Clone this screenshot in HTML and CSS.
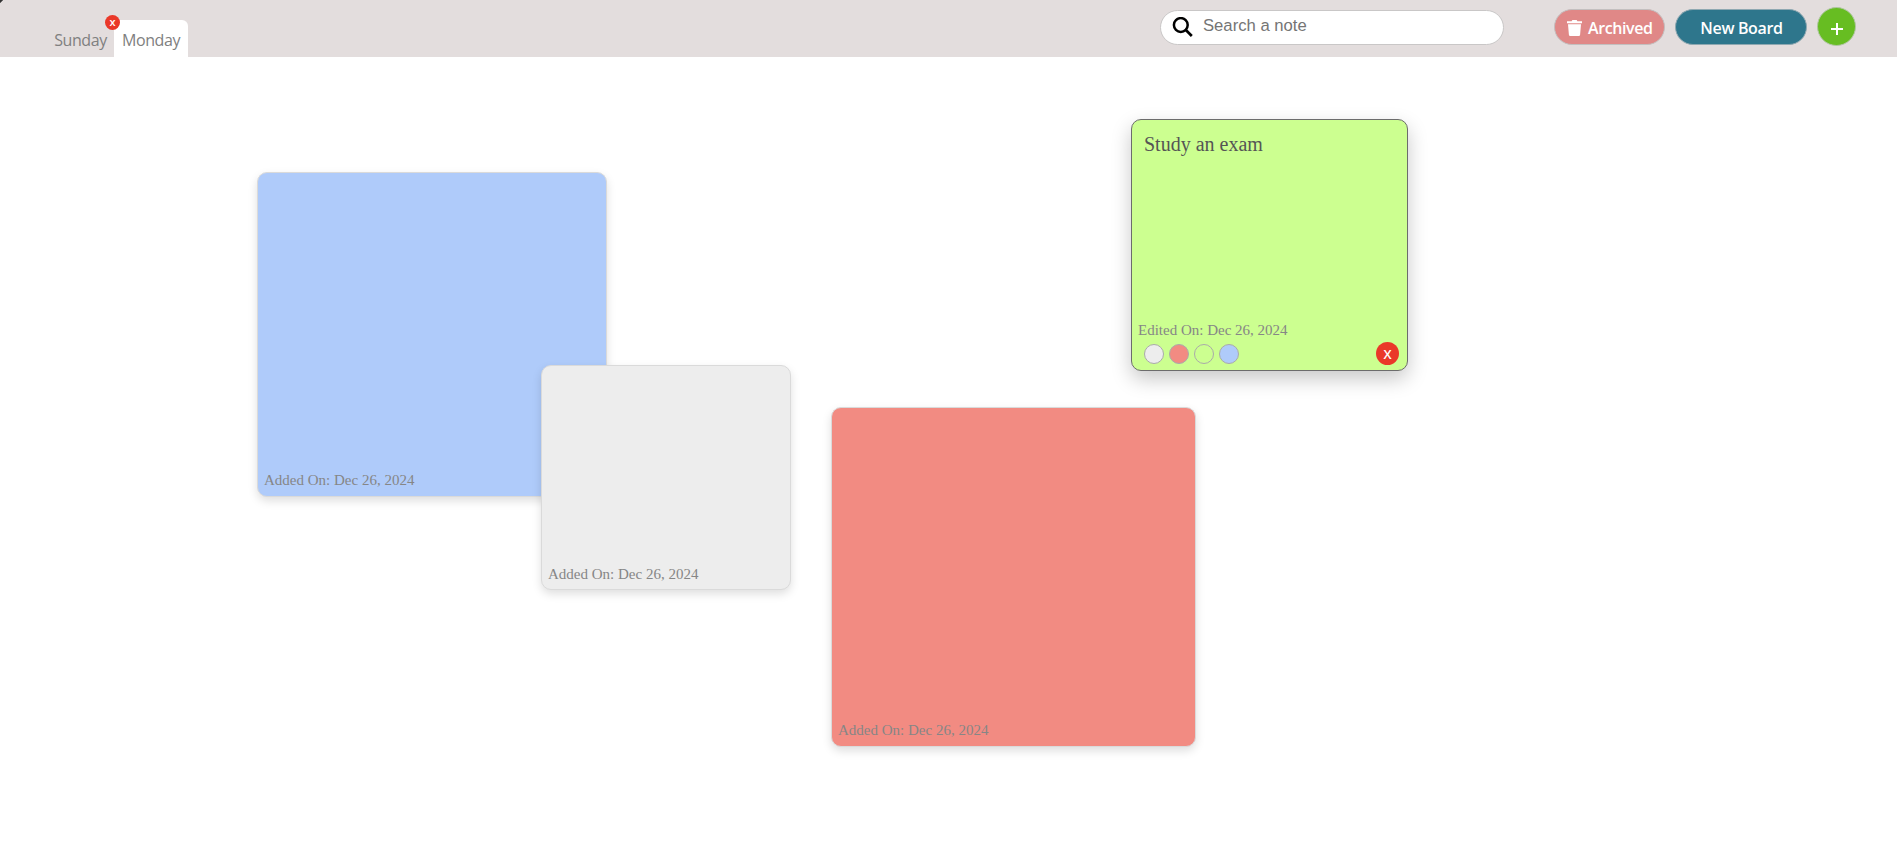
FILE: index.html
```html
<!DOCTYPE html>
<html lang="en">
<head>
<meta charset="utf-8">
<title>Notes board</title>
<link rel="stylesheet" href="styles.css">
</head>
<body>
<header class="bar">
  <nav class="tabs">
    <a class="tab tab-sunday"><span class="tab-label">Sunday</span><span class="tab-close">x</span></a>
    <a class="tab tab-active"><span class="tab-label">Monday</span></a>
  </nav>
  <div class="search">
    <svg class="search-icon" viewBox="0 0 21 21"><circle cx="8.8" cy="8.0" r="6.9" fill="none" stroke="#000" stroke-width="2.5"/><path d="M13.6 12.8L19.8 19" stroke="#000" stroke-width="2.7"/></svg>
    <input class="search-input" type="text" placeholder="Search a note">
  </div>
  <div class="actions">
    <button class="btn archived"><svg class="trash" viewBox="0 0 15 16"><path d="M0 1.2h4.6L5.4 0h4.2l.8 1.2H15v2H0zM1 4.3h13l-.9 10.5q-.1 1.2-1.3 1.2H3.2q-1.2 0-1.3-1.2z" fill="#fff"/></svg><span class="archived-label">Archived</span></button>
    <button class="btn board"><span class="board-label">New Board</span></button>
    <button class="btn add"><svg class="plus" viewBox="0 0 12 12"><path d="M6 0v12M0 6h12" stroke="#fff" stroke-width="2"/></svg></button>
  </div>
</header>
<main class="canvas">
  <article class="note note-blue"><p class="date">Added On: Dec 26, 2024</p></article>
  <article class="note note-gray"><p class="date">Added On: Dec 26, 2024</p></article>
  <article class="note note-red"><p class="date">Added On: Dec 26, 2024</p></article>
  <article class="note note-green">
    <p class="text">Study an exam</p>
    <p class="date">Edited On: Dec 26, 2024</p>
    <div class="tools">
      <span class="dot dot-gray"></span><span class="dot dot-red"></span><span class="dot dot-green"></span><span class="dot dot-blue"></span>
      <button class="remove">X</button>
    </div>
  </article>
</main>
</body>
</html>
```
FILE: styles.css
```css
* { box-sizing: border-box; }
body {
  margin: 0;
  height: 865px;
  overflow: hidden;
  background: #fff;
  font-family: "Open Sans", "Noto Sans", sans-serif;
}
button { font-family: inherit; cursor: pointer; }
.bar {
  position: relative;
  display: flex;
  height: 57px;
  background: #e3dddd;
}
.bar::before {
  content: "";
  position: absolute;
  left: 0;
  top: 0;
  width: 3px;
  height: 3px;
  background: linear-gradient(135deg, #333 45%, transparent 60%);
}
.tabs {
  display: flex;
  align-items: flex-end;
  width: 1160px;
  padding-left: 46px;
}
.tab {
  position: relative;
  display: flex;
  justify-content: center;
  height: 37px;
  padding-top: 7px;
  font-size: 16px;
  line-height: 26px;
  color: #808080;
}
.tab-sunday { width: 68px; padding-left: 1px; }
.tab-sunday .tab-label { letter-spacing: -0.45px; }
.tab-active {
  width: 74px;
  border-radius: 0 6px 0 0;
  background: #fff;
}
.tab-active .tab-label { letter-spacing: -0.4px; }
.tab-close {
  position: absolute;
  right: -6px;
  top: -5px;
  z-index: 1;
  width: 15px;
  height: 15px;
  border-radius: 50%;
  background: #ea3829;
  color: #fff;
  font-size: 11px;
  font-weight: 600;
  line-height: 13px;
  text-align: center;
}
.search {
  display: flex;
  width: 344px;
  height: 35px;
  margin-top: 10px;
  padding: 6px 11px 0;
  border: 1px solid #c9c7c7;
  border-radius: 18px;
  background: #fff;
}
.search-icon { width: 21px; height: 21px; }
.search-input {
  height: 20px;
  margin: -1px 0 0 10px;
  padding: 0;
  border: 0;
  outline: 0;
  background: transparent;
  font: 16.67px/20px "Liberation Sans", Arial, sans-serif;
}
.search-input::placeholder { color: #757575; opacity: 1; }
.actions { display: flex; margin-left: 50px; }
.btn {
  display: flex;
  align-items: center;
  padding: 0;
  border: 1px solid #c3bfbf;
  color: #fff;
  font-size: 16px;
  font-weight: 600;
  line-height: 22px;
}
.archived {
  width: 111px;
  height: 36px;
  margin-top: 9px;
  padding: 2px 0 0 12px;
  border-radius: 18px;
  background: #e08887;
}
.trash { width: 15px; height: 16px; }
.archived-label { margin-left: 6px; letter-spacing: -0.4px; }
.board {
  justify-content: center;
  width: 132px;
  height: 36px;
  margin: 9px 0 0 10px;
  padding-top: 2px;
  padding-left: 1px;
  border-color: #8fa8b1;
  border-radius: 18px;
  background: #2e768c;
}
.board-label { letter-spacing: -0.35px; }
.add {
  justify-content: center;
  width: 39px;
  height: 39px;
  margin: 7px 0 0 10px;
  padding-top: 4px;
  border-color: #b1c6a4;
  border-radius: 50%;
  background: #67bd22;
}
.plus { width: 12px; height: 12px; }
.note {
  position: absolute;
  display: flex;
  flex-direction: column;
  justify-content: flex-end;
  border: 1px solid #dadada;
  border-radius: 10px;
  box-shadow: 0 4px 10px rgba(0, 0, 0, 0.13);
  font-family: "Liberation Serif", "Times New Roman", serif;
}
.note p { margin: 0; }
.date {
  padding: 0 6px 6px;
  color: #868686;
  font-size: 15px;
  line-height: 17px;
}
.note-blue { left: 257px; top: 172px; width: 350px; height: 325px; background: #afcbfa; }
.note-gray { left: 541px; top: 365px; width: 250px; height: 225px; background: #ededed; }
.note-red { left: 831px; top: 407px; width: 365px; height: 340px; background: #f28b82; }
.note-blue .date, .note-red .date { padding-bottom: 7px; }
.note-green {
  left: 1131px;
  top: 119px;
  width: 277px;
  height: 252px;
  border-color: #6c6c6c;
  background: #ccff90;
  box-shadow: 0 8px 20px rgba(0, 0, 0, 0.22);
}
.text {
  flex: 1;
  padding: 12px 12px 0;
  color: #555;
  font-size: 20px;
  line-height: 24px;
}
.note-green .date { padding-bottom: 0; }
.tools {
  display: flex;
  gap: 5px;
  height: 31px;
  padding: 5px 8px 0 12px;
}
.dot {
  width: 20px;
  height: 20px;
  border: 1px solid #aaa;
  border-radius: 50%;
}
.dot-gray { background: #ededed; }
.dot-red { background: #f28b82; }
.dot-green { background: #ccff90; }
.dot-blue { background: #afcbfa; }
.remove {
  width: 23px;
  height: 23px;
  margin: -2px 0 0 auto;
  padding: 0;
  border: 0;
  border-radius: 50%;
  background: #ea3829;
  color: #fff;
  font: 600 13px/20px "Open Sans", sans-serif;
}
```
